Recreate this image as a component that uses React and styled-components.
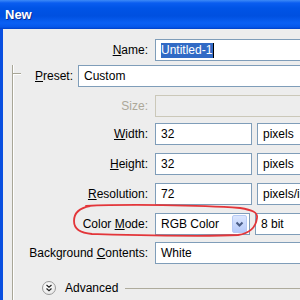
import React from 'react';
import styled, { createGlobalStyle } from 'styled-components';

const GlobalStyle = createGlobalStyle`
  html, body {
    margin: 0;
    padding: 0;
    overflow: hidden;
    background: #ededed;
  }
  body {
    font-family: "Liberation Sans", Arial, sans-serif;
    font-size: 12px;
    color: #000;
  }
`;

const Dialog = styled.div`
  position: relative;
  width: 380px;
  height: 300px;
  overflow: hidden;
  background: #ededed;
`;

const TitleBar = styled.div`
  height: 29px;
  box-sizing: border-box;
  padding-left: 5px;
  display: flex;
  align-items: center;
  background: linear-gradient(
    #3d8af7 0px,
    #0a5df0 3px,
    #0054e6 8px,
    #0050e0 16px,
    #0a60f4 23px,
    #0557ea 27px,
    #0040c8 29px
  );
  color: #fff;
  font-weight: bold;
  font-size: 13px;
  text-shadow: 1px 1px 0 #0b2a8c;
`;

const Body = styled.div`
  height: 271px;
  box-sizing: border-box;
  border-left: 3px solid #0a4fe0;
  padding-top: 10px;
  display: flex;
  flex-direction: column;
`;

const Row = styled.div`
  display: grid;
  grid-template-columns: ${(p) => p.$labelWidth}px 1fr;
  column-gap: 7px;
  align-items: center;
  height: 22px;
  margin-top: ${(p) => p.$top || 0}px;
`;

const Label = styled.label`
  text-align: right;
  white-space: nowrap;
  color: ${(p) => (p.$disabled ? '#aca899' : '#000')};
`;

const Fields = styled.div`
  display: flex;
  align-items: center;
  gap: 5px;
  height: 22px;
`;

const Field = styled.div`
  position: relative;
  height: 22px;
  box-sizing: border-box;
  width: ${(p) => (p.$width ? `${p.$width}px` : 'auto')};
  flex: ${(p) => (p.$width ? 'none' : '1')};
  border: 1px solid ${(p) => (p.$disabled ? '#cbc8b9' : '#7f9db9')};
  background: ${(p) => (p.$disabled ? '#ededed' : '#fff')};
  padding: 0 5px;
  display: flex;
  align-items: center;
  white-space: nowrap;
`;

const Selected = styled.span`
  background: #316ac5;
  color: #fff;
  line-height: 15px;
  padding-right: 1px;
`;

const Caret = styled.span`
  width: 1px;
  height: 15px;
  background: #000;
`;

const DropButton = styled.div`
  margin-left: auto;
  margin-right: -3px;
  width: 15px;
  height: 18px;
  box-sizing: border-box;
  border: 1px solid #b7caf4;
  border-radius: 2px;
  background: linear-gradient(#dbe6fe, #b6cafa);
  display: flex;
  align-items: center;
  justify-content: center;
`;

const Group = styled.div`
  position: relative;
  margin-left: 9px;
  margin-top: 4px;
  border-left: 1px solid #a8a697;
  box-shadow: inset 1px 0 0 #fff;
  padding-bottom: 40px;

  &::before {
    content: '';
    position: absolute;
    left: 0;
    top: 8px;
    width: 8px;
    border-top: 1px solid #a8a697;
    box-shadow: 0 1px 0 #fff;
  }
`;

const PresetRow = styled.div`
  display: flex;
  align-items: center;
  height: 22px;
  padding-left: 22px;
  gap: 5px;
`;

const AdvancedRow = styled.div`
  display: flex;
  align-items: center;
  margin-top: 17px;
  margin-left: 29px;
  height: 14px;
`;

const RoundButton = styled.div`
  width: 14px;
  height: 14px;
  box-sizing: border-box;
  border-radius: 50%;
  border: 1px solid #9a9a9a;
  background: radial-gradient(circle at 40% 35%, #ffffff, #e2e2e2);
  display: flex;
  align-items: center;
  justify-content: center;
`;

const AdvancedText = styled.span`
  margin-left: 9px;
`;

const Rule = styled.div`
  flex: 1;
  height: 1px;
  margin-left: 7px;
  background: #aeab9c;
`;

const Scribble = styled.svg`
  position: absolute;
  left: 0;
  top: 0;
  pointer-events: none;
`;

const U = styled.u`
  text-decoration: underline;
`;

const Chevron = () => (
  <svg width="9" height="6" viewBox="0 0 9 6">
    <path d="M1.5 1.5 L4.5 4.5 L7.5 1.5" fill="none" stroke="#4a5d86" strokeWidth="2" />
  </svg>
);

const DoubleChevron = () => (
  <svg width="8" height="8" viewBox="0 0 8 8">
    <path d="M1.5 1 L4 3.3 L6.5 1 M1.5 4.5 L4 6.8 L6.5 4.5" fill="none" stroke="#222" strokeWidth="1.2" />
  </svg>
);

const App = () => (
  <>
    <GlobalStyle />
    <Dialog>
      <TitleBar>New</TitleBar>
      <Body>
        <Row $labelWidth={145}>
          <Label><U>N</U>ame:</Label>
          <Fields>
            <Field>
              <Selected>Untitled-1</Selected>
              <Caret />
            </Field>
          </Fields>
        </Row>
        <Group>
          <PresetRow>
            <Label><U>P</U>reset:</Label>
            <Field>Custom</Field>
          </PresetRow>
          <Row $labelWidth={135} $top={8}>
            <Label $disabled>Size:</Label>
            <Fields>
              <Field $disabled />
            </Fields>
          </Row>
          <Row $labelWidth={135} $top={6}>
            <Label><U>W</U>idth:</Label>
            <Fields>
              <Field $width={97}>32</Field>
              <Field $width={100}>pixels</Field>
            </Fields>
          </Row>
          <Row $labelWidth={135} $top={8}>
            <Label><U>H</U>eight:</Label>
            <Fields>
              <Field $width={97}>32</Field>
              <Field $width={100}>pixels</Field>
            </Fields>
          </Row>
          <Row $labelWidth={135} $top={8}>
            <Label><U>R</U>esolution:</Label>
            <Fields>
              <Field $width={97}>72</Field>
              <Field $width={100}>pixels/inch</Field>
            </Fields>
          </Row>
          <Row $labelWidth={135} $top={8}>
            <Label>Color <U>M</U>ode:</Label>
            <Fields>
              <Field $width={95}>
                RGB Color
                <DropButton>
                  <Chevron />
                </DropButton>
              </Field>
              <Field $width={100}>8 bit</Field>
            </Fields>
          </Row>
          <Row $labelWidth={135} $top={7}>
            <Label>Background <U>C</U>ontents:</Label>
            <Fields>
              <Field>White</Field>
            </Fields>
          </Row>
          <AdvancedRow>
            <RoundButton>
              <DoubleChevron />
            </RoundButton>
            <AdvancedText>Advanced</AdvancedText>
            <Rule />
          </AdvancedRow>
        </Group>
      </Body>
      <Scribble width="300" height="300" viewBox="0 0 300 300">
        <path
          d="M86 206 C125 204, 200 205, 240 208 C252 210, 258 212, 257 218 C256 226, 252 233, 238 235 C200 237, 130 235, 92 234 C79 233, 74 228, 74 221 C74 213, 79 208, 90 206"
          fill="none"
          stroke="#e3363a"
          strokeWidth="1.8"
          strokeLinecap="round"
        />
      </Scribble>
    </Dialog>
  </>
);

export default App;
